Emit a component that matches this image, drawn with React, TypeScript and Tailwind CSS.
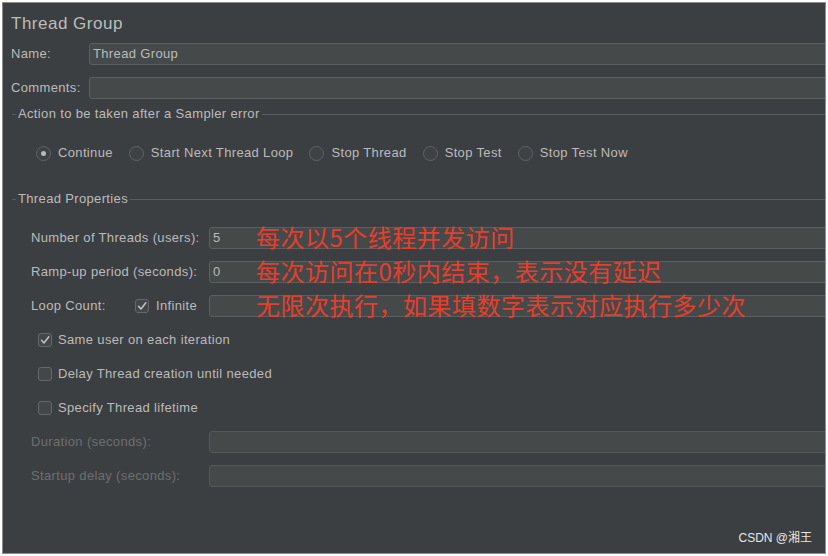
const font = "font-['Liberation_Sans','Helvetica',sans-serif]";

function Check({ checked }: { checked?: boolean }) {
  return (
    <span className="flex h-[14px] w-[14px] shrink-0 items-center justify-center rounded-[3px] border border-[#646869] bg-[#43474a]">
      {checked && (
        <svg width="12" height="12" viewBox="0 0 12 12" fill="none">
          <path d="M2.5 6.2 L5 9 L9.8 2.8" stroke="#c4c4c4" strokeWidth="1.5" strokeLinecap="round" strokeLinejoin="round" />
        </svg>
      )}
    </span>
  );
}

function Radio({ label, selected }: { label: string; selected?: boolean }) {
  return (
    <div className="mr-[16px] flex items-center gap-[7px]">
      <span className="flex h-[15px] w-[15px] items-center justify-center rounded-full border border-[#5f6364] bg-[#3e4244]">
        {selected && <span className="h-[5px] w-[5px] rounded-full bg-[#b9b9b9]" />}
      </span>
      <span>{label}</span>
    </div>
  );
}

function Field({ value, className = "" }: { value?: string; className?: string }) {
  return (
    <div
      className={`-mr-[4px] flex h-[22px] flex-1 items-center rounded-[3px] border border-[#5b5f60] bg-[#45494a] px-[3px] text-[13px] text-[#bbbbbb] ${className}`}
    >
      {value}
    </div>
  );
}

function Legend({ title }: { title: string }) {
  return (
    <div className="flex h-[16px] items-center pl-[9px]">
      <span className="h-px w-[4px] bg-[#5a5d5f]" />
      <span className="px-[2px] text-[#bbbbbb]">{title}</span>
      <span className="h-px flex-1 bg-[#5a5d5f]" />
    </div>
  );
}

function Note({ text }: { text: string }) {
  return (
    <span className="pointer-events-none absolute left-[47px] top-1/2 -translate-y-[55%] whitespace-nowrap font-['Noto_Sans_CJK_SC',sans-serif] text-[24px] leading-none tracking-[0.5px] text-[#e53f2c]">
      {text}
    </span>
  );
}

export default function App() {
  return (
    <div className="h-[556px] w-[828px] bg-white pl-[2px] pt-[2px]">
      <div
        className={`relative flex h-[552px] w-[824px] flex-col overflow-hidden border border-[#8b8d8e] bg-[#3c3f41] text-[13px] tracking-[0.35px] text-[#bbbbbb] ${font}`}
      >
        <div className="flex h-[40px] items-center pl-[8px] pt-[2px] text-[17px] tracking-[0.5px] text-[#bdbdbd]">Thread Group</div>

        <div className="flex h-[22px] items-center pl-[8px]">
          <span className="w-[78px]">Name:</span>
          <Field value="Thread Group" />
        </div>
        <div className="mt-[12px] flex h-[22px] items-center pl-[8px]">
          <span className="w-[78px]">Comments:</span>
          <Field />
        </div>

        <div className="mt-[7px]">
          <Legend title="Action to be taken after a Sampler error" />
        </div>

        <div className="mt-[21px] flex h-[20px] items-center pl-[33px]">
          <Radio label="Continue" selected />
          <Radio label="Start Next Thread Loop" />
          <Radio label="Stop Thread" />
          <Radio label="Stop Test" />
          <Radio label="Stop Test Now" />
        </div>

        <div className="mt-[28px]">
          <Legend title="Thread Properties" />
        </div>

        <div className="mt-[20px] flex h-[22px] items-center pl-[28px]">
          <span className="w-[178px]">Number of Threads (users):</span>
          <div className="relative flex flex-1">
            <Field value="5" />
            <Note text="每次以5个线程并发访问" />
          </div>
        </div>
        <div className="mt-[12px] flex h-[22px] items-center pl-[28px]">
          <span className="w-[178px]">Ramp-up period (seconds):</span>
          <div className="relative flex flex-1">
            <Field value="0" />
            <Note text="每次访问在0秒内结束，表示没有延迟" />
          </div>
        </div>
        <div className="mt-[12px] flex h-[22px] items-center pl-[28px]">
          <span className="w-[104px]">Loop Count:</span>
          <div className="flex w-[74px] items-center gap-[7px]">
            <Check checked />
            <span>Infinite</span>
          </div>
          <div className="relative flex flex-1">
            <Field />
            <Note text="无限次执行，如果填数字表示对应执行多少次" />
          </div>
        </div>

        <div className="mt-[13px] flex h-[20px] items-center gap-[6px] pl-[35px]">
          <Check checked />
          <span>Same user on each iteration</span>
        </div>
        <div className="mt-[14px] flex h-[20px] items-center gap-[6px] pl-[35px]">
          <Check />
          <span>Delay Thread creation until needed</span>
        </div>
        <div className="mt-[14px] flex h-[20px] items-center gap-[6px] pl-[35px]">
          <Check />
          <span>Specify Thread lifetime</span>
        </div>

        <div className="mt-[13px] flex h-[22px] items-center pl-[28px] text-[#6c6f71]">
          <span className="w-[178px]">Duration (seconds):</span>
          <Field className="bg-[#3f4244] border-[#54585a]" />
        </div>
        <div className="mt-[12px] flex h-[22px] items-center pl-[28px] text-[#6c6f71]">
          <span className="w-[178px]">Startup delay (seconds):</span>
          <Field className="bg-[#3f4244] border-[#54585a]" />
        </div>

        <div className="mt-auto flex justify-end pb-[6px] pr-[13px] font-['Liberation_Sans_Narrow','Liberation_Sans','Noto_Sans_CJK_SC',sans-serif] text-[12px] tracking-normal text-[#e6e6e6]">
          CSDN @湘王
        </div>
      </div>
    </div>
  );
}
